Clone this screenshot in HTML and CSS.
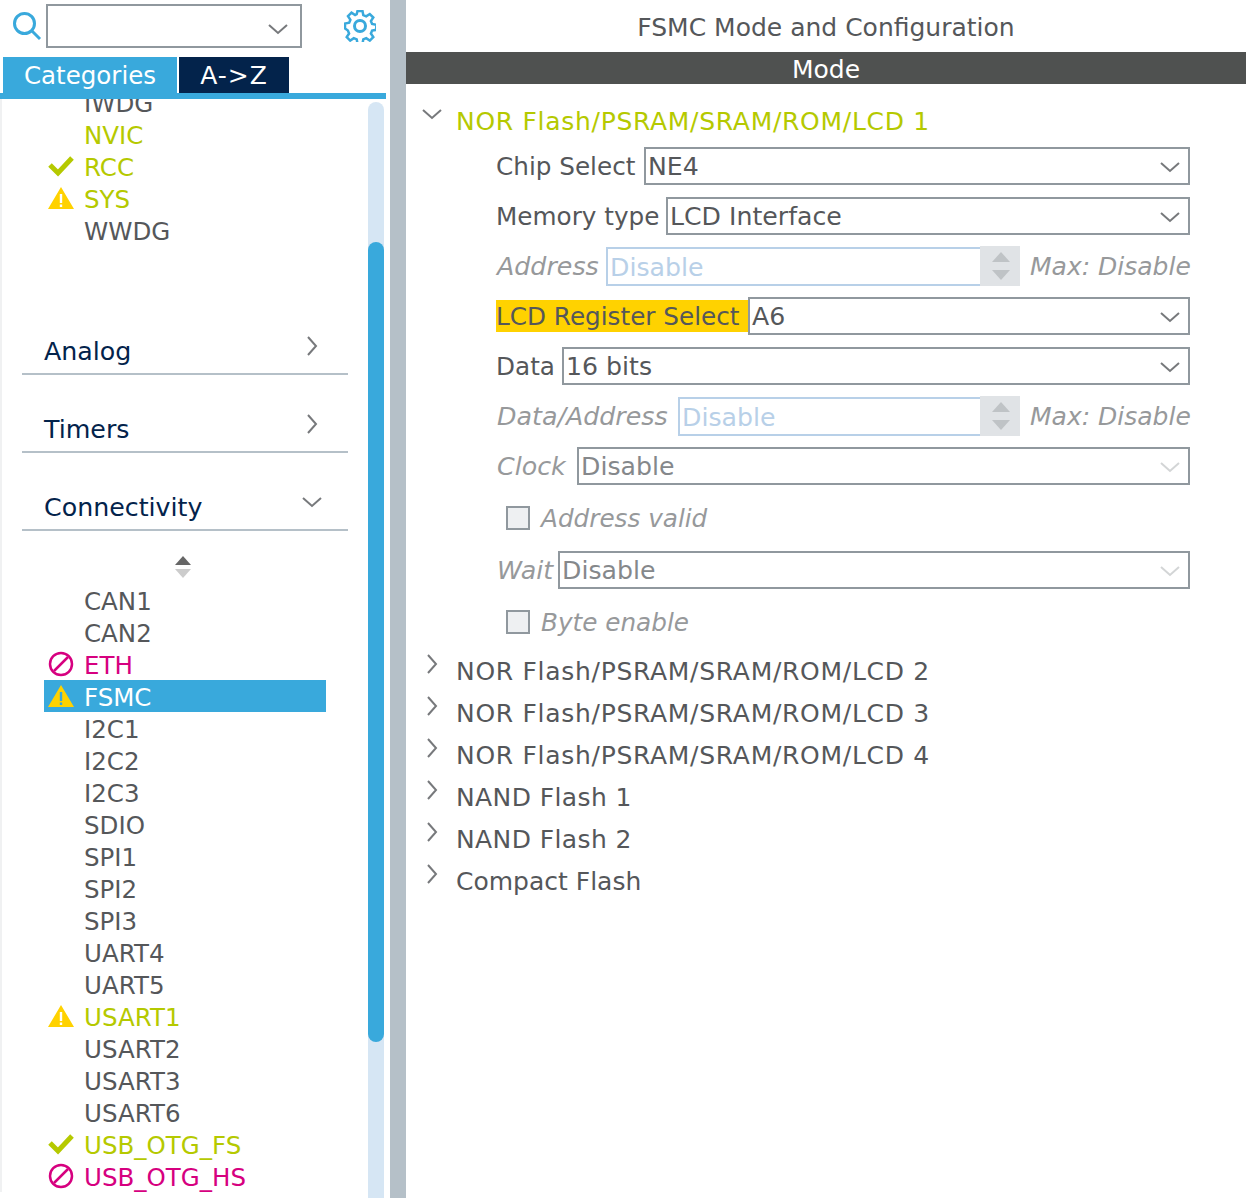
FILE: index.html
```html
<!DOCTYPE html>
<html lang="en">
<head>
    <meta charset="UTF-8">
    <title>FSMC Mode and Configuration</title>
    <link rel="stylesheet" href="styles.css">
</head>
<body>
    <svg class="defs" width="0" height="0">
        <symbol id="i-down" viewBox="0 0 20 12"><path d="M1 2l9 8 9-8" fill="none" stroke="currentColor" stroke-width="2"/></symbol>
        <symbol id="i-right" viewBox="0 0 12 20"><path d="M2 1l8 9-8 9" fill="none" stroke="currentColor" stroke-width="2"/></symbol>
        <symbol id="i-check" viewBox="0 0 26 22"><path d="M2 10l8 8L24 3" fill="none" stroke="#b5c900" stroke-width="5"/></symbol>
        <symbol id="i-warn" viewBox="0 0 26 22"><path fill-rule="evenodd" d="M13 0L26 22H0zM11.800 7v9h2.400V7zM11.800 17.500V20h2.400v-2.500z" fill="#ffd200"/></symbol>
        <symbol id="i-stop" viewBox="0 0 26 26"><circle cx="13" cy="13" r="11" fill="none" stroke="#d6007f" stroke-width="2.500"/><path d="M6 20L20 6" stroke="#d6007f" stroke-width="2.500"/></symbol>
        <symbol id="i-spin" viewBox="0 0 18 30"><path d="M9 1l9 10H0z" fill="#bfc3c6"/><path d="M0 19h18L9 29z" fill="#bfc3c6"/></symbol>
    </svg>

    <aside class="sidebar">
        <div class="search-row">
            <svg class="search-icon" viewBox="0 0 30 30"><circle cx="12.500" cy="12.500" r="10" fill="none" stroke="#39a9dc" stroke-width="3"/><path d="M20 20l8 8" stroke="#39a9dc" stroke-width="3"/></svg>
            <div class="search-box"><svg class="chev"><use href="#i-down"/></svg></div>
            <svg class="gear" viewBox="0 0 32 32">
                <path d="M13.500 1h5l.8 4.200 2.900 1.200 3.600-2.400 3.500 3.500-2.400 3.600 1.200 2.900 4.200.8v5l-4.200.8-1.200 2.900 2.400 3.600-3.500 3.500-3.600-2.400-2.900 1.200-.8 4.200h-5l-.8-4.200-2.900-1.200-3.600 2.400-3.500-3.500 2.400-3.600-1.200-2.900L1 18.500v-5l4.200-.8 1.200-2.900L4 6.200 7.500 2.700l3.600 2.400 1.600-.9z" fill="none" stroke="#39a9dc" stroke-width="2.500"/>
                <circle cx="16" cy="16" r="5.500" fill="none" stroke="#39a9dc" stroke-width="3"/>
            </svg>
        </div>
        <div class="tabs">
            <div class="tab tab-active">Categories</div>
            <div class="tab tab-az">A-&gt;Z</div>
        </div>
        <div class="pane">
            <div class="pane-inner">
                <ul class="items">
                    <li class="item">IWDG</li>
                    <li class="item ok">NVIC</li>
                    <li class="item ok"><svg class="ico"><use href="#i-check"/></svg>RCC</li>
                    <li class="item ok"><svg class="ico"><use href="#i-warn"/></svg>SYS</li>
                    <li class="item">WWDG</li>
                </ul>
                <div class="cat cat-first">Analog<svg class="cat-right"><use href="#i-right"/></svg></div>
                <div class="cat">Timers<svg class="cat-right"><use href="#i-right"/></svg></div>
                <div class="cat">Connectivity<svg class="cat-down"><use href="#i-down"/></svg></div>
                <div class="sorter">
                    <svg viewBox="0 0 18 24"><path d="M9 1l8 9H1z" fill="#666"/><path d="M1 14h16l-8 9z" fill="#ccc"/></svg>
                </div>
                <ul class="items">
                    <li class="item">CAN1</li>
                    <li class="item">CAN2</li>
                    <li class="item bad"><svg class="ico"><use href="#i-stop"/></svg>ETH</li>
                    <li class="item selected"><svg class="ico"><use href="#i-warn"/></svg>FSMC</li>
                    <li class="item">I2C1</li>
                    <li class="item">I2C2</li>
                    <li class="item">I2C3</li>
                    <li class="item">SDIO</li>
                    <li class="item">SPI1</li>
                    <li class="item">SPI2</li>
                    <li class="item">SPI3</li>
                    <li class="item">UART4</li>
                    <li class="item">UART5</li>
                    <li class="item ok"><svg class="ico"><use href="#i-warn"/></svg>USART1</li>
                    <li class="item">USART2</li>
                    <li class="item">USART3</li>
                    <li class="item">USART6</li>
                    <li class="item ok"><svg class="ico"><use href="#i-check"/></svg>USB_OTG_FS</li>
                    <li class="item bad"><svg class="ico"><use href="#i-stop"/></svg>USB_OTG_HS</li>
                </ul>
            </div>
            <div class="scrollbar"><div class="thumb"></div></div>
        </div>
    </aside>

    <div class="splitter"></div>

    <main class="main">
        <h1 class="title">FSMC Mode and Configuration</h1>
        <div class="mode-bar">Mode</div>

        <div class="group group-nor open"><svg class="tw-down"><use href="#i-down"/></svg>NOR Flash/PSRAM/SRAM/ROM/LCD 1</div>

        <div class="form">
            <div class="row">
                <label class="lbl w-chip">Chip Select</label>
                <div class="select">NE4<svg class="chev"><use href="#i-down"/></svg></div>
            </div>
            <div class="row">
                <label class="lbl w-memory">Memory type</label>
                <div class="select">LCD Interface<svg class="chev"><use href="#i-down"/></svg></div>
            </div>
            <div class="row">
                <label class="lbl off w-address">Address</label>
                <div class="num">Disable</div>
                <div class="spin"><svg><use href="#i-spin"/></svg></div>
                <span class="max">Max: Disable</span>
            </div>
            <div class="row">
                <label class="lbl warn w-register">LCD Register Select</label>
                <div class="select">A6<svg class="chev"><use href="#i-down"/></svg></div>
            </div>
            <div class="row">
                <label class="lbl w-data">Data</label>
                <div class="select">16 bits<svg class="chev"><use href="#i-down"/></svg></div>
            </div>
            <div class="row">
                <label class="lbl off w-data-address">Data/Address</label>
                <div class="num">Disable</div>
                <div class="spin"><svg><use href="#i-spin"/></svg></div>
                <span class="max">Max: Disable</span>
            </div>
            <div class="row">
                <label class="lbl off w-clock">Clock</label>
                <div class="select dis">Disable<svg class="chev"><use href="#i-down"/></svg></div>
            </div>
            <div class="row row-check">
                <span class="box"></span><span class="check-lbl">Address valid</span>
            </div>
            <div class="row row-wait">
                <label class="lbl off w-wait">Wait</label>
                <div class="select dis">Disable<svg class="chev"><use href="#i-down"/></svg></div>
            </div>
            <div class="row row-check">
                <span class="box"></span><span class="check-lbl">Byte enable</span>
            </div>
        </div>

        <div class="groups">
            <div class="group group-nor"><svg class="tw-right"><use href="#i-right"/></svg>NOR Flash/PSRAM/SRAM/ROM/LCD 2</div>
            <div class="group group-nor"><svg class="tw-right"><use href="#i-right"/></svg>NOR Flash/PSRAM/SRAM/ROM/LCD 3</div>
            <div class="group group-nor"><svg class="tw-right"><use href="#i-right"/></svg>NOR Flash/PSRAM/SRAM/ROM/LCD 4</div>
            <div class="group group-nand"><svg class="tw-right"><use href="#i-right"/></svg>NAND Flash 1</div>
            <div class="group group-nand"><svg class="tw-right"><use href="#i-right"/></svg>NAND Flash 2</div>
            <div class="group"><svg class="tw-right"><use href="#i-right"/></svg>Compact Flash</div>
        </div>
    </main>
</body>
</html>
```

FILE: styles.css
```css
* {
    box-sizing: border-box;
}
html, body {
    height: 100%;
}
body {
    margin: 0;
    display: flex;
    overflow: hidden;
    font-family: "DejaVu Sans", sans-serif;
    font-size: 25px;
    color: #55575a;
    background: #fff;
}
.defs {
    position: absolute;
}
svg {
    display: block;
}

/* left column */
.sidebar {
    width: 390px;
    flex: none;
    height: 100%;
    display: flex;
    flex-direction: column;
    background: #fff;
}
.search-row {
    height: 57px;
    flex: none;
    display: flex;
    align-items: flex-start;
    padding-left: 12px;
}
.search-icon {
    width: 30px;
    height: 30px;
    margin-top: 11px;
    flex: none;
}
.search-box {
    width: 256px;
    height: 44px;
    margin: 4px 0 0 4px;
    border: 2px solid #90989e;
    position: relative;
    flex: none;
}
.search-box .chev {
    right: 12px;
    top: 17px;
}
.gear {
    width: 32px;
    height: 32px;
    margin: 10px 0 0 42px;
    flex: none;
}
.chev {
    position: absolute;
    width: 20px;
    height: 12px;
    color: #77797c;
}
.tabs {
    height: 36px;
    flex: none;
    display: flex;
    gap: 2px;
    padding-left: 3px;
}
.tab {
    width: 110px;
    background: #03234b;
    color: #fff;
    text-align: center;
    line-height: 38px;
}
.tab-active {
    width: 174px;
    font-size: 24.500px;
    background: #39a9dc;
}
.tab-az {
    letter-spacing: 1px;
}
.pane {
    flex: 1;
    min-height: 0;
    position: relative;
    overflow: hidden;
    border-top: 6px solid #39a9dc;
    margin-right: 4px;
}
.pane-inner {
    margin-top: -13px;
    padding-left: 2px;
    border-left: 2px solid #f0f1f2;
}
.items {
    list-style: none;
    margin: 0;
    padding: 0;
}
.item {
    position: relative;
    width: 282px;
    height: 32px;
    margin-left: 40px;
    padding-left: 40px;
    font-size: 24.500px;
    line-height: 36px;
    white-space: nowrap;
}
.ico {
    position: absolute;
    left: 4px;
    top: 5px;
    width: 26px;
    height: 22px;
}
.bad .ico {
    height: 26px;
    top: 3px;
}
.ok {
    color: #b5c900;
}
.bad {
    color: #d6007f;
}
.selected {
    background: #39a9dc;
    color: #fff;
}
.cat {
    position: relative;
    width: 326px;
    height: 78px;
    margin-left: 18px;
    padding: 38px 0 0 22px;
    font-size: 25.300px;
    line-height: 34px;
    color: #03234b;
    border-bottom: 2px solid #b5c0c8;
}
.cat-first {
    margin-top: 67px;
    height: 62px;
    padding-top: 22px;
}
.cat-right, .cat-down {
    position: absolute;
    color: #77797c;
}
.cat-right {
    width: 12px;
    height: 20px;
    right: 30px;
    bottom: 17px;
}
.cat-down {
    width: 20px;
    height: 12px;
    right: 26px;
    bottom: 21px;
}
.sorter {
    height: 53px;
    padding: 24px 0 0 170px;
}
.sorter svg {
    width: 18px;
    height: 24px;
}
.scrollbar {
    position: absolute;
    top: 3px;
    bottom: 0;
    right: 2px;
    width: 16px;
    background: #d6e6f4;
    border-radius: 8px 8px 0 0;
}
.thumb {
    position: absolute;
    top: 140px;
    left: 0;
    width: 16px;
    height: 800px;
    background: #39a9dc;
    border-radius: 8px;
}
.splitter {
    width: 16px;
    flex: none;
    background: #b5c0c8;
}

/* right column */
.main {
    flex: 1;
    min-width: 0;
}
.title {
    margin: 0;
    height: 52px;
    font-size: 25px;
    font-weight: normal;
    line-height: 56px;
    text-align: center;
}
.mode-bar {
    height: 32px;
    background: #4f5150;
    color: #fff;
    line-height: 36px;
    text-align: center;
}
.group {
    position: relative;
    height: 42px;
    padding-left: 50px;
    line-height: 44px;
    white-space: nowrap;
}
.group-nor {
    letter-spacing: .7px;
}
.group-nand {
    letter-spacing: .4px;
}
.group.open {
    margin-top: 16px;
    color: #b5c900;
}
.tw-down, .tw-right {
    position: absolute;
    color: #77797c;
}
.tw-down {
    left: 16px;
    top: 8px;
    width: 20px;
    height: 12px;
}
.tw-right {
    left: 20px;
    top: 4px;
    width: 12px;
    height: 20px;
}
.form {
    padding: 5px 56px 0 90px;
}
.row {
    display: flex;
    align-items: center;
    height: 38px;
    margin-bottom: 12px;
}
.lbl {
    flex: none;
    font-size: 24.700px;
    white-space: nowrap;
}
.lbl.off {
    padding-left: 1px;
    color: #97999b;
    font-size: 25.300px;
    font-style: italic;
}
.lbl.warn {
    height: 32px;
    line-height: 34px;
    background: #ffd200;
}
.w-chip { width: 148px; }
.w-memory { width: 170px; }
.w-address { width: 110px; }
.w-register { width: 252px; }
.w-data { width: 66px; }
.w-data-address { width: 182px; }
.w-clock { width: 81px; }
.w-wait { width: 62px; }
.select {
    position: relative;
    flex: 1;
    height: 38px;
    border: 2px solid #90989e;
    padding-left: 2px;
    font-size: 25.200px;
    line-height: 36px;
    white-space: nowrap;
}
.select .chev {
    right: 8px;
    top: 12px;
}
.select.dis {
    color: #85888b;
}
.select.dis .chev {
    color: #d3d5d6;
}
.num {
    flex: 1;
    height: 39px;
    border: 2px solid #b8d0e8;
    border-right: 0;
    padding-left: 2px;
    font-size: 25.200px;
    line-height: 37px;
    color: #b8d0e8;
}
.spin {
    width: 40px;
    height: 40px;
    flex: none;
    background: #e0e3e6;
    padding: 5px 0 0 12px;
}
.spin svg {
    width: 18px;
    height: 30px;
}
.max {
    width: 160px;
    flex: none;
    margin-left: 10px;
    white-space: nowrap;
    font-size: 25px;
    color: #97999b;
    font-style: italic;
}
.row-check {
    height: 24px;
    margin-top: 21px;
    margin-bottom: 21px;
    padding-left: 10px;
}
.row-wait {
    margin-bottom: 0;
}
.box {
    width: 24px;
    height: 24px;
    flex: none;
    border: 2px solid #90989e;
    background: #eef0f2;
}
.check-lbl {
    margin-left: 11px;
    font-size: 24.700px;
    color: #97999b;
    font-style: italic;
}
.groups {
    margin-top: -5px;
}
```
